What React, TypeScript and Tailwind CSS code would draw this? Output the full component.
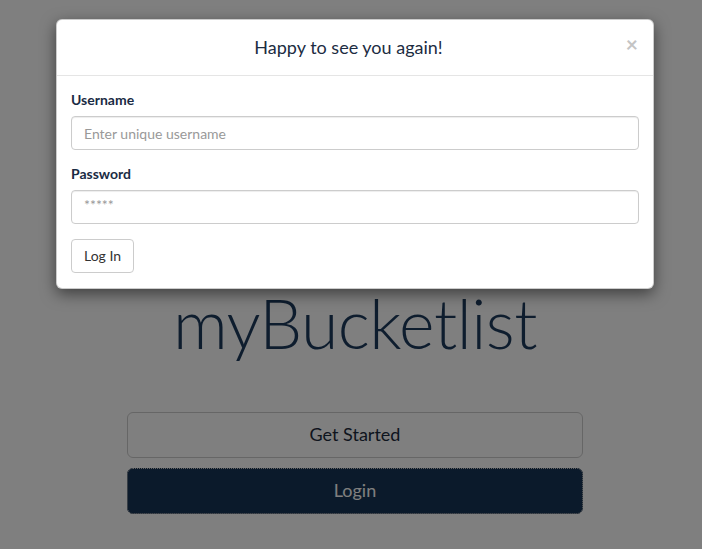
import React from "react";

const font = { fontFamily: "Lato, 'Open Sans', sans-serif" };

const App: React.FC = () => {
  return (
    <div className="relative h-[549px] w-[702px] overflow-hidden bg-white" style={font}>
      {/* page underneath */}
      <div className="flex flex-col items-center pl-[8px] pt-[286px]">
        <h1 className="text-[68px] font-light leading-[1.1] text-[#1d3a5c] tracking-[-0.5px]">
          myBucketlist
        </h1>
        <div className="mt-[51px] flex w-[456px] flex-col gap-[10px]">
          <button className="h-[46px] rounded-[6px] border border-[#cccccc] bg-white text-[18px] text-[#1d2b3c]">
            Get Started
          </button>
          <button className="h-[46px] rounded-[6px] border border-[#16304f] bg-[#163556] text-[18px] text-white outline-1 outline-dotted outline-[#c8c8c8] outline-offset-[-1px]">
            Login
          </button>
        </div>
      </div>

      {/* backdrop */}
      <div className="absolute inset-0 bg-black/50" />

      {/* modal */}
      <div className="absolute left-[56px] top-[19px] w-[598px] rounded-[6px] border border-black/20 bg-white shadow-[0_5px_15px_rgba(0,0,0,0.5)]">
        <div className="relative border-b border-[#e5e5e5] p-[15px]">
          <h4 className="pr-[13px] text-center text-[18px] leading-[25px] text-[#1c2c42]">
            Happy to see you again!
          </h4>
          <button className="absolute right-[15px] top-[14px] text-[21px] font-bold leading-[20px] text-[#c4c4c4]">
            ×
          </button>
        </div>
        <div className="px-[14px] pb-[15px] pt-[15px]">
          <div className="mb-[15px]">
            <label className="mb-[7px] block text-[14px] font-bold leading-[18px] text-[#1a2b44]">
              Username
            </label>
            <input
              className="block h-[34px] w-full rounded-[4px] border border-[#cccccc] px-[12px] text-[14px] text-[#555] shadow-[inset_0_1px_1px_rgba(0,0,0,0.075)] placeholder:text-[#999]"
              placeholder="Enter unique username"
            />
          </div>
          <div className="mb-[15px]">
            <label className="mb-[7px] block text-[14px] font-bold leading-[18px] text-[#1a2b44]">
              Password
            </label>
            <input
              className="block h-[34px] w-full rounded-[4px] border border-[#cccccc] px-[12px] pb-[6px] text-[14px] text-[#555] shadow-[inset_0_1px_1px_rgba(0,0,0,0.075)] placeholder:text-[#999]"
              placeholder="*****"
            />
          </div>
          <button className="h-[34px] rounded-[4px] border border-[#cccccc] bg-white px-[12px] text-[14px] leading-[20px] text-[#333]">
            Log In
          </button>
        </div>
      </div>
    </div>
  );
};

export default App;
